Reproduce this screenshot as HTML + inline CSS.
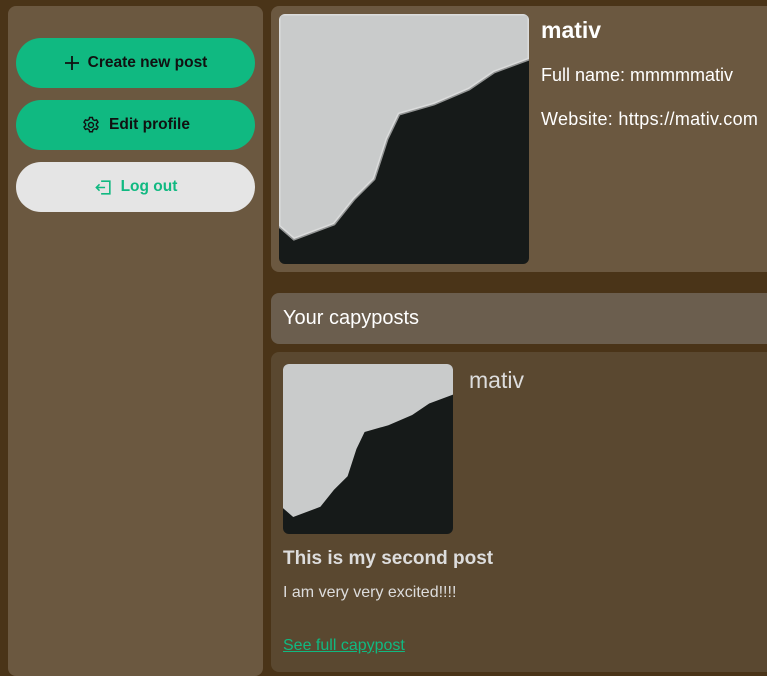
<!DOCTYPE html>
<html><head><style>
*{box-sizing:border-box;margin:0;padding:0}
body{width:767px;height:661px;overflow:hidden;background:#4a3418;font-family:"Liberation Sans",sans-serif;position:relative}
.side{position:absolute;left:8px;top:6px;width:255px;height:670px;background:#6b5840;border-radius:8px}
.btn{position:absolute;left:8px;width:239px;height:50px;border-radius:25px;display:flex;align-items:center;justify-content:center;font-weight:bold;font-size:15.5px;gap:8px}
.g{background:#10b981;color:#111}
.l{background:#e5e5e5;color:#10b981}
.card{position:absolute;left:271px;top:6px;width:510px;height:266px;background:#6b5840;border-radius:8px}
.hdr{position:absolute;left:271px;top:293px;width:510px;height:51px;background:#6b5e4e;border-radius:8px;color:#fff;font-size:20px;padding:14px 12px}
.post{position:absolute;left:271px;top:352px;width:510px;height:320px;background:#5a4830;border-radius:8px}
.img{position:absolute;border-radius:6px;overflow:hidden}
</style></head><body>
<div class="side">
<div class="btn g" style="top:32px"><svg width="16" height="16" viewBox="0 0 16 16"><path d="M8 1v14M1 8h14" stroke="#111" stroke-width="1.8"/></svg>Create new post</div>
<div class="btn g" style="top:94px"><svg width="20" height="20" viewBox="0 0 24 24" fill="none" stroke="#111" stroke-width="1.7"><circle cx="12" cy="12" r="3"/><path d="M10.3 3h3.4l.6 2.5 2 1.1 2.4-.8 1.7 2.9-1.9 1.7v2.3l1.9 1.7-1.7 2.9-2.4-.8-2 1.1-.6 2.5h-3.4l-.6-2.5-2-1.1-2.4.8-1.7-2.9 1.9-1.7v-2.3L3.6 8.7l1.7-2.9 2.4.8 2-1.1z"/></svg>Edit profile</div>
<div class="btn l" style="top:156px"><svg width="19" height="19" viewBox="0 0 24 24" fill="none" stroke="#10b981" stroke-width="2"><path d="M9 4h11v16H9M14 12H3M7 8l-4 4 4 4"/></svg>Log out</div>
</div>
<div class="card">
<div class="img" style="left:8px;top:8px;width:250px;height:250px"><svg width="250" height="250" viewBox="0 0 250 250"><rect width="250" height="250" fill="#161a19"/><path d="M0 0H250V45L215 58 190 75 155 90 120 100 108 125 95 165 75 185 55 210 15 225 0 212Z" fill="#c9cbcb"/><path d="M0 0H250V45L215 58 190 75 155 90 120 100 108 125 95 165 75 185 55 210 15 225 0 212Z" fill="none" stroke="#e8e8e8" stroke-width="3" opacity=".6"/></svg></div>
<div style="position:absolute;left:270px;top:11px;color:#fff;font-weight:bold;font-size:23px">mativ</div>
<div style="position:absolute;left:270px;top:59px;color:#fff;font-size:18px">Full name: mmmmmativ</div>
<div style="position:absolute;left:270px;top:103px;color:#fff;font-size:18px;letter-spacing:.3px">Website: https://mativ.com</div>
</div>
<div class="hdr">Your capyposts</div>
<div class="post">
<div class="img" style="left:12px;top:12px;width:170px;height:170px"><svg width="170" height="170" viewBox="0 0 250 250"><rect width="250" height="250" fill="#161a19"/><path d="M0 0H250V45L215 58 190 75 155 90 120 100 108 125 95 165 75 185 55 210 15 225 0 212Z" fill="#c9cbcb"/></svg></div>
<div style="position:absolute;left:198px;top:15px;color:#ddd;font-size:23px">mativ</div>
<div style="position:absolute;left:12px;top:196px;color:#ddd;font-weight:bold;font-size:19px">This is my second post</div>
<div style="position:absolute;left:12px;top:232px;color:#ddd;font-size:16px">I am very very excited!!!!</div>
<div style="position:absolute;left:12px;top:285px;color:#10b981;font-size:16px;text-decoration:underline">See full capypost</div>
</div>
</body></html>
